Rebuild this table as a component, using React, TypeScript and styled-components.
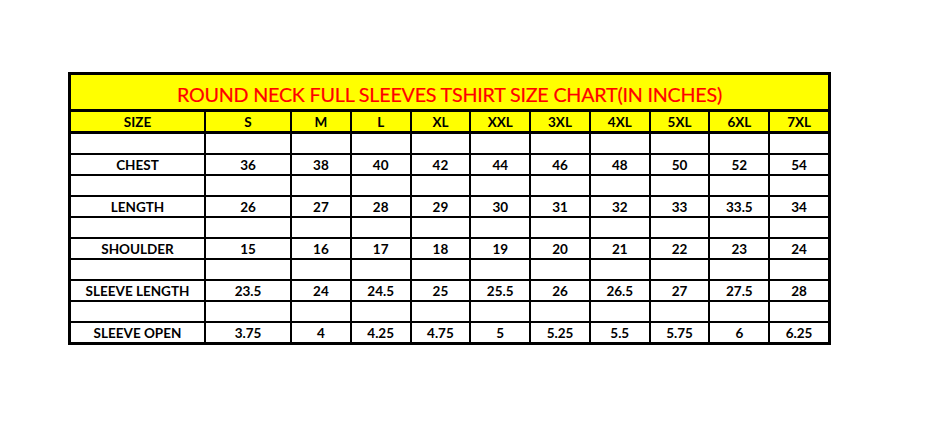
import React from "react";
import styled, { createGlobalStyle } from "styled-components";

const GlobalStyle = createGlobalStyle`
    body {
        margin: 0;
        background-color: #ffffff;
        font-family: Lato, "Liberation Sans", sans-serif;
    }
`;

const Page = styled.div`
    width: 929px;
    height: 425px;
    padding: 72px 0 0 68px;
    box-sizing: border-box;
`;

const Chart = styled.div`
    display: grid;
    grid-template-columns: 133px 84px repeat(9, 1fr);
    gap: 2px;
    width: 763px;
    box-sizing: border-box;
    border: 3px solid #000;
    background-color: #000;
`;

const Title = styled.div`
    grid-column: 1 / -1;
    height: 34px;
    margin-bottom: 1px;
    display: flex;
    align-items: center;
    justify-content: center;
    padding-top: 5px;
    box-sizing: border-box;
    background-color: #ffff00;
    color: #ff0000;
    font-size: 19.7px;
    letter-spacing: -0.2px;
    -webkit-text-stroke: 0.2px #ff0000;
`;

const Cell = styled.div<{ $head?: boolean }>`
    height: 19px;
    margin-bottom: ${(props) => (props.$head ? "1px" : "0")};
    display: flex;
    align-items: center;
    justify-content: center;
    background-color: ${(props) => (props.$head ? "#ffff00" : "#ffffff")};
    color: #000;
    font-weight: 700;
    font-size: 13.5px;
`;

const sizes = ["S", "M", "L", "XL", "XXL", "3XL", "4XL", "5XL", "6XL", "7XL"];

const rows: { label: string; values: string[] }[] = [
    { label: "CHEST", values: ["36", "38", "40", "42", "44", "46", "48", "50", "52", "54"] },
    { label: "LENGTH", values: ["26", "27", "28", "29", "30", "31", "32", "33", "33.5", "34"] },
    { label: "SHOULDER", values: ["15", "16", "17", "18", "19", "20", "21", "22", "23", "24"] },
    { label: "SLEEVE LENGTH", values: ["23.5", "24", "24.5", "25", "25.5", "26", "26.5", "27", "27.5", "28"] },
    { label: "SLEEVE OPEN", values: ["3.75", "4", "4.25", "4.75", "5", "5.25", "5.5", "5.75", "6", "6.25"] },
];

export default function App() {
    return (
        <>
            <GlobalStyle />
            <Page>
                <Chart>
                    <Title>ROUND NECK FULL SLEEVES TSHIRT SIZE CHART(IN INCHES)</Title>
                    <Cell $head>SIZE</Cell>
                    {sizes.map((size) => (
                        <Cell $head key={size}>
                            {size}
                        </Cell>
                    ))}
                    {rows.map((row) => (
                        <React.Fragment key={row.label}>
                            {/* blank spacer row above each measurement */}
                            <Cell />
                            {row.values.map((_, i) => (
                                <Cell key={"e" + i} />
                            ))}
                            <Cell>{row.label}</Cell>
                            {row.values.map((value, i) => (
                                <Cell key={i}>{value}</Cell>
                            ))}
                        </React.Fragment>
                    ))}
                </Chart>
            </Page>
        </>
    );
}
